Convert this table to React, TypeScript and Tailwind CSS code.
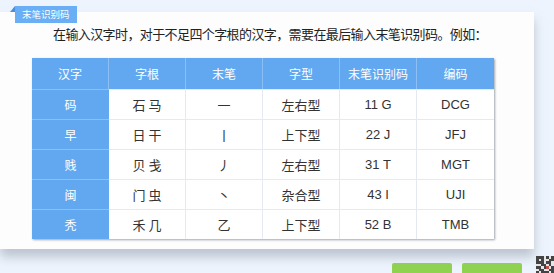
const rows = [
  ["码", "石 马", "一", "左右型", "11 G", "DCG"],
  ["早", "日 干", "丨", "上下型", "22 J", "JFJ"],
  ["贱", "贝 戋", "丿", "左右型", "31 T", "MGT"],
  ["闽", "门 虫", "丶", "杂合型", "43 I", "UJI"],
  ["秃", "禾 几", "乙", "上下型", "52 B", "TMB"],
];

const heads = ["汉字", "字根", "末笔", "字型", "末笔识别码", "编码"];

function Qr() {
  const cells = [
    "1110101", "1010011", "1110110", "0011010", "1101101", "0110011", "1011101",
  ];
  return (
    <svg width="18" height="18" viewBox="0 0 7 7" shapeRendering="crispEdges">
      <rect width="7" height="7" fill="#e6e6e6" />
      {cells.map((r, y) =>
        r.split("").map((c, x) =>
          c === "1" ? <rect key={`${x}-${y}`} x={x} y={y} width="1" height="1" fill={x === 4 && y === 4 ? "#c0504d" : "#444"} /> : null
        )
      )}
    </svg>
  );
}

export default function App() {
  return (
    <div
      className="relative w-[554px] h-[273px] bg-[#edf4fd] overflow-hidden flex flex-col"
      style={{ fontFamily: '"Noto Sans CJK SC", "Liberation Sans", sans-serif' }}
    >
      <div className="relative mt-[12px] w-[534px] h-[242px] bg-[#fdfdfd] shadow-[0_8px_10px_rgba(140,150,165,0.5)]">
        {/* tag */}
        <div className="absolute left-[15px] -top-[6px] h-[17px] px-[7px] bg-[#6aaef5] text-white text-[9.5px] leading-[17px]">
          末笔识别码
        </div>
        <div className="absolute left-[10px] -top-[6px] w-0 h-0 border-t-[6px] border-t-transparent border-r-[5px] border-r-[#4a8ee0]" />

        <p className="pl-[53px] pt-[13px] text-[13px] leading-[18px] tracking-[-0.6px] text-[#222] whitespace-nowrap">
          在输入汉字时，对于不足四个字根的汉字，需要在最后输入末笔识别码。例如：
        </p>

        <div className="ml-[32px] mt-[15px] w-[462px] shadow-[1px_1px_2px_rgba(120,130,145,0.7)]">
          <div className="grid grid-cols-6 h-[31px] bg-[#62a8f0] text-white text-[12px]">
            {heads.map((h, i) => (
              <div key={h} className={`flex items-center justify-center ${i < 5 ? "border-r border-r-[#8cc0f4]" : ""}`}>
                {h}
              </div>
            ))}
          </div>
          {rows.map((r, ri) => (
            <div key={ri} className="grid grid-cols-6 h-[30px] border-t border-t-[#e3eaf2] text-[13px] text-[#333]">
              {r.map((c, ci) => (
                <div
                  key={ci}
                  className={`flex items-center justify-center ${
                    ci === 0 ? "bg-[#62a8f0] text-white text-[12px] border-t border-t-[#8cc0f4] -mt-px" : "bg-white"
                  } ${ci < 5 && ci > 0 ? "border-r border-r-[#e3eaf2]" : ""}`}
                  style={ci >= 4 ? { fontFamily: '"Liberation Sans", sans-serif' } : undefined}
                >
                  {c}
                </div>
              ))}
            </div>
          ))}
        </div>
      </div>

      <div className="flex mt-[14px]">
        <div className="ml-[392px] w-[60px] h-[10px] bg-[#8fd351] rounded-t-[2px]" />
        <div className="ml-[10px] w-[60px] h-[10px] bg-[#8fd351] rounded-t-[2px]" />
      </div>
      <div className="absolute left-[536px] top-[256px]">
        <Qr />
      </div>
    </div>
  );
}
